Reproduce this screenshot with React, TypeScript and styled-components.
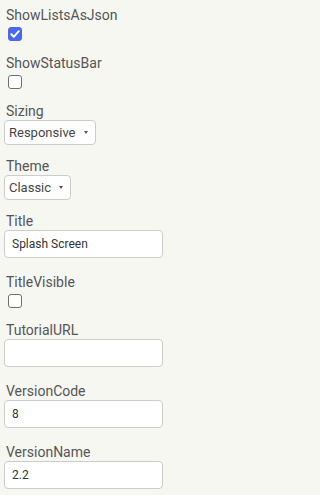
import styled, { createGlobalStyle } from 'styled-components';

const GlobalStyle = createGlobalStyle`
    html, body {
        margin: 0;
        padding: 0;
        background: #f7f7f2;
    }
`;

const Panel = styled.div`
    padding: 7px 0 0 4px;
    font-family: Roboto, "Liberation Sans", sans-serif;
    background: #f7f7f2;
    min-height: 495px;
    box-sizing: border-box;
`;

const Property = styled.div`
    display: flex;
    flex-direction: column;
    align-items: flex-start;
    margin-bottom: 13px;
`;

const Label = styled.div`
    font-size: 14px;
    line-height: 17px;
    color: #555555;
    padding-left: 2px;
`;

const CheckBox = styled.span<{ $checked?: boolean }>`
    box-sizing: border-box;
    display: flex;
    align-items: center;
    justify-content: center;
    width: 14px;
    height: 14px;
    margin: 3px 0 1px 4px;
    border: 1px solid ${(p) => (p.$checked ? '#4a67f0' : '#6f6f6f')};
    border-radius: 3px;
    background: ${(p) => (p.$checked ? '#4a67f0' : '#ffffff')};
`;

const Dropdown = styled.button`
    display: flex;
    align-items: center;
    gap: 8px;
    height: 25px;
    padding: 0 7px 0 4px;
    border: 1px solid #cccccc;
    border-radius: 4px;
    background: #ffffff;
    font-family: Roboto, "Liberation Sans", sans-serif;
    font-size: 13px;
    color: #444444;
`;

const Caret = styled.span`
    width: 0;
    height: 0;
    border-left: 2.5px solid transparent;
    border-right: 2.5px solid transparent;
    border-top: 3px solid #555555;
`;

const TextBox = styled.input.attrs({ type: 'text' })`
    box-sizing: border-box;
    width: 159px;
    height: 28px;
    margin-bottom: 3px;
    padding: 0 7px;
    border: 1px solid #cccccc;
    border-radius: 4px;
    background: #ffffff;
    font-family: Roboto, "Liberation Sans", sans-serif;
    font-size: 12px;
    color: #333333;
    outline: none;
`;

function Check({ checked }: { checked?: boolean }) {
    return (
        <CheckBox $checked={checked}>
            {checked && (
                <svg width="12" height="12" viewBox="0 0 12 12">
                    <path d="M2.3 6.3 L4.8 8.8 L9.8 3.2" fill="none" stroke="#ffffff" strokeWidth="2" strokeLinecap="round" strokeLinejoin="round" />
                </svg>
            )}
        </CheckBox>
    );
}

export default function App() {
    return (
        <Panel>
            <GlobalStyle />
            <Property>
                <Label>ShowListsAsJson</Label>
                <Check checked />
            </Property>
            <Property>
                <Label>ShowStatusBar</Label>
                <Check />
            </Property>
            <Property>
                <Label>Sizing</Label>
                <Dropdown>Responsive<Caret /></Dropdown>
            </Property>
            <Property>
                <Label>Theme</Label>
                <Dropdown>Classic<Caret /></Dropdown>
            </Property>
            <Property>
                <Label>Title</Label>
                <TextBox defaultValue="Splash Screen" />
            </Property>
            <Property>
                <Label>TitleVisible</Label>
                <Check />
            </Property>
            <Property>
                <Label>TutorialURL</Label>
                <TextBox defaultValue="" />
            </Property>
            <Property>
                <Label>VersionCode</Label>
                <TextBox defaultValue="8" />
            </Property>
            <Property>
                <Label>VersionName</Label>
                <TextBox defaultValue="2.2" />
            </Property>
        </Panel>
    );
}
